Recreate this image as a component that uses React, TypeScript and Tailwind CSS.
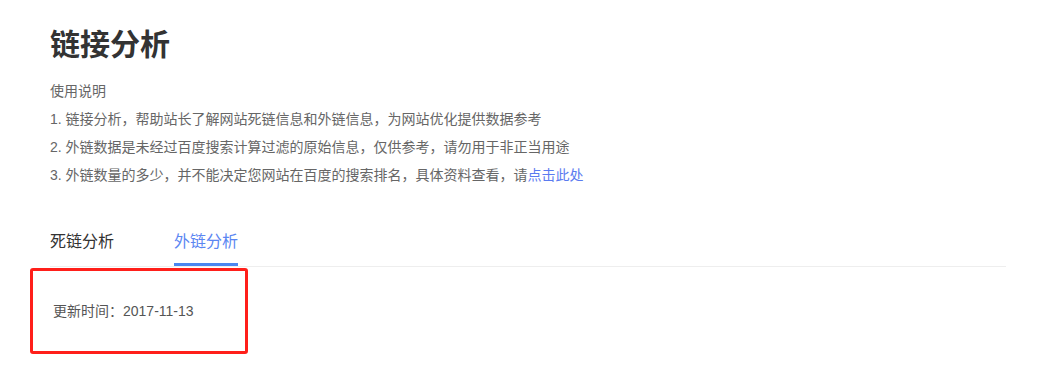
export default function App() {
  return (
    <div
      className="min-h-[384px] w-full bg-white pl-[50px] pr-[37px] pt-[25px]"
      style={{ fontFamily: '"Liberation Sans", "Noto Sans CJK SC", sans-serif' }}
    >
      {/* 标题 */}
      <h1 className="text-[30px] font-bold leading-[40px] text-[#333]">链接分析</h1>

      {/* 使用说明 */}
      <div className="mt-3 text-[14px] leading-7 text-[#666]">
        <p>使用说明</p>
        <p>1. 链接分析，帮助站长了解网站死链信息和外链信息，为网站优化提供数据参考</p>
        <p>2. 外链数据是未经过百度搜索计算过滤的原始信息，仅供参考，请勿用于非正当用途</p>
        <p>
          3. 外链数量的多少，并不能决定您网站在百度的搜索排名，具体资料查看，请
          <a href="#" className="text-[#5b7bf0]">
            点击此处
          </a>
        </p>
      </div>

      {/* 标签页 */}
      <div className="mt-[41px] flex gap-[60px] border-b border-[#eee]">
        <button className="border-b-[3px] border-transparent pb-[9px] text-[16px] leading-6 text-[#333]">
          死链分析
        </button>
        <button className="border-b-[3px] border-[#4a86f0] pb-[9px] text-[16px] leading-6 text-[#5b86f2]">
          外链分析
        </button>
      </div>

      {/* 内容 */}
      <div className="relative pt-[34px]">
        <p className="pl-[3px] text-[14px] leading-5 text-[#555]">更新时间：2017-11-13</p>
        <div className="pointer-events-none absolute left-[-20px] top-[1px] h-[86px] w-[218px] rounded-[3px] border-[3px] border-[#ff1f1a]" />
      </div>
    </div>
  );
}
